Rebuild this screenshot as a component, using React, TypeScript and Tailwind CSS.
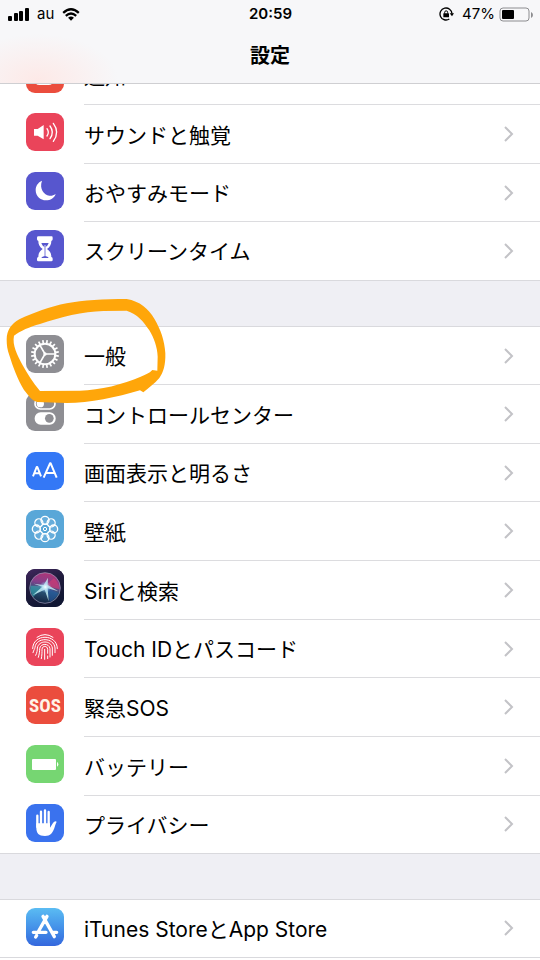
import type { ReactNode } from "react";

const FONT =
  "font-['Inter','Noto_Sans_CJK_JP',sans-serif]";

type Item = { label: string; tile: string; icon: ReactNode; circled?: boolean };

function Glyph({ children }: { children: ReactNode }) {
  return (
    <svg viewBox="0 0 114 114" className="block size-full" aria-hidden="true">
      {children}
    </svg>
  );
}

const teeth = Array.from({ length: 20 }, (_, i) => i * 18);
const petals = Array.from({ length: 8 }, (_, i) => i * 45);

const NotificationIcon = (
  <Glyph>
    <rect x="24" y="24" width="60" height="66" rx="16" fill="#fff" />
  </Glyph>
);

const SoundIcon = (
  <Glyph>
    <path d="M24 48h11l18-12v43L35 68H24z" fill="#fff" />
    <g fill="none" stroke="#fff" strokeWidth="4" strokeLinecap="round">
      <path d="M63 47q8 11 0 22" />
      <path d="M72 39q14 19 0 38" />
      <path d="M82 31q20 27 0 54" />
    </g>
  </Glyph>
);

const MoonIcon = (
  <Glyph>
    <path d="M48 26C36 31 29 42 29 54c0 18 14 31 31 31 13 0 25-7 29-19-7 5-13 6-19 5C54 69 39 50 48 26z" fill="#fff" />
  </Glyph>
);

const HourglassIcon = (
  <Glyph>
    <path
      d="M38 19h39q3 0 3 4v5q0 4-4 5c0 11-4 18-13 24 9 6 13 13 13 24q4 1 4 5v4q0 4-4 4H37q-4 0-4-4v-4q0-4 4-5c0-11 4-18 13-24-9-6-13-13-13-24q-4-1-4-5v-5q0-4 4-4z"
      fill="#fff"
    />
    <path d="M46 39h22c-2 6-5 9-9 12v27c4 2 7 3 9 6H46c2-3 5-4 9-6V51c-4-3-7-6-9-12z" fill="#5756ce" />
    <path d="M55 45h4v34h-4z" fill="#fff" opacity=".6" />
  </Glyph>
);

const GearIcon = (
  <Glyph>
    <g stroke="#fff" fill="none">
      <circle cx="57" cy="57" r="31" strokeWidth="6" />
      {teeth.map((a) => (
        <path key={a} d="M57 25v-10" strokeWidth="5" transform={`rotate(${a + 9} 57 57)`} />
      ))}
      <path d="M57 57h30M57 57L42 31M57 57L42 83" strokeWidth="5" />
      <circle cx="57" cy="57" r="5" fill="#fff" strokeWidth="0" />
    </g>
  </Glyph>
);

const TogglesIcon = (
  <Glyph>
    <rect x="27" y="16" width="60" height="32" rx="16" fill="none" stroke="#fff" strokeWidth="5" />
    <circle cx="43" cy="32" r="11" fill="#fff" />
    <rect x="26" y="58" width="63" height="37" rx="18" fill="#fff" />
    <circle cx="70" cy="76" r="13" fill="#8e8e93" />
  </Glyph>
);

const TextSizeIcon = (
  <Glyph>
    <g fill="none" stroke="#fff" strokeLinejoin="round">
      <path d="M21 73l11-28h2l11 28M25 64h16" strokeWidth="6" />
      <path d="M53 77l19-43h2l18 43M60 63h27" strokeWidth="6" />
    </g>
  </Glyph>
);

const FlowerIcon = (
  <Glyph>
    <g fill="#fff" fillOpacity=".08" stroke="#fff" strokeWidth="4">
      {petals.map((a) => (
        <circle key={a} cx="57" cy="31" r="12" transform={`rotate(${a} 57 57)`} />
      ))}
      <circle cx="57" cy="57" r="15" fill="none" strokeWidth="3" />
      <circle cx="57" cy="57" r="5" fill="none" strokeWidth="3" />
    </g>
  </Glyph>
);

const SiriIcon = (
  <Glyph>
    <defs>
      <radialGradient id="siriCore">
        <stop offset="0" stopColor="#fff" />
        <stop offset=".3" stopColor="#d4f4ff" stopOpacity=".7" />
        <stop offset="1" stopColor="#7fc7ff" stopOpacity="0" />
      </radialGradient>
      <linearGradient id="siriBack" x1="0" y1="0" x2=".4" y2="1">
        <stop offset="0" stopColor="#41265e" />
        <stop offset=".5" stopColor="#1f1b3c" />
        <stop offset="1" stopColor="#111733" />
      </linearGradient>
      <linearGradient id="siriBall" x1=".6" y1="0" x2=".4" y2="1">
        <stop offset="0" stopColor="#b03476" />
        <stop offset=".35" stopColor="#84408c" />
        <stop offset=".6" stopColor="#2a5678" />
        <stop offset="1" stopColor="#14233f" />
      </linearGradient>
    </defs>
    <rect width="114" height="114" fill="url(#siriBack)" />
    <circle cx="57" cy="57" r="46" fill="url(#siriBall)" stroke="#a3a0be" strokeWidth="2" />
    <path d="M57 50L84 28q15 14 17 33z" fill="#d83c70" opacity=".6" />
    <path d="M56 50L14 50q-2 20 8 34z" fill="#3cb9bf" opacity=".5" />
    <path d="M57 52L72 98q18-9 24-26z" fill="#265dad" opacity=".5" />
    <path d="M66 26l-1 22 32 19-32-9 3 39-12-35-36 17 29-26-26-9 30 4z" fill="#c9f3f8" opacity=".8" />
    <circle cx="58" cy="54" r="18" fill="url(#siriCore)" />
  </Glyph>
);

const FingerprintIcon = (
  <Glyph>
    <g fill="none" stroke="#fff" strokeWidth="3" strokeLinecap="round">
      <path d="M33 28q24-17 48 0" />
      <path d="M20 62C20 16 94 16 94 62" />
      <path d="M21 74C23 66 27 62 27 58C31 27 84 27 87 60v14" />
      <path d="M29 82C33 74 34 68 34 60C38 36 76 36 79 60v22" />
      <path d="M37 88C40 78 41 70 41 62C43 45 70 45 72 62v25" />
      <path d="M46 92C48 82 48 72 48 64C49 52 64 52 65 64v12M65 84v8" />
      <path d="M56 94V64" />
    </g>
  </Glyph>
);

const SosIcon = (
  <span className="flex size-full items-center justify-center font-['Liberation_Sans_Narrow','Roboto_Condensed','Liberation_Sans',sans-serif] text-[19px] font-bold leading-none text-[#fff3e8]">
    SOS
  </span>
);

const BatteryIcon = (
  <Glyph>
    <rect x="18" y="42" width="72" height="33" rx="3" fill="#fff" />
    <path d="M93 51q4 2 4 7t-4 7z" fill="#fff" />
  </Glyph>
);

const HandIcon = (
  <Glyph>
    <g stroke="#fff" strokeWidth="7" strokeLinecap="round" fill="none">
      <path d="M34 35v34M45 23v42M57 19v44M68 24v42" />
    </g>
    <path d="M31 58h41v13l9-14q5-7 11-4-3 6-5 13C81 87 73 96 57 96 38 96 31 87 31 72z" fill="#fff" />
  </Glyph>
);

const AppStoreIcon = (
  <Glyph>
    <g stroke="#fff" strokeWidth="10" strokeLinecap="round" fill="none">
      <path d="M63 25L38 69M51 25l34 61M22 73h38M79 73h13M32 82l-3 5" />
    </g>
  </Glyph>
);

const SECTIONS: Item[][] = [
  [
    { label: "通知", tile: "bg-[#eb4d3d]", icon: NotificationIcon },
    { label: "サウンドと触覚", tile: "bg-[#ea445a]", icon: SoundIcon },
    { label: "おやすみモード", tile: "bg-[#5756ce]", icon: MoonIcon },
    { label: "スクリーンタイム", tile: "bg-[#5756ce]", icon: HourglassIcon },
  ],
  [
    { label: "一般", tile: "bg-[#8e8e93]", icon: GearIcon, circled: true },
    { label: "コントロールセンター", tile: "bg-[#8e8e93]", icon: TogglesIcon },
    { label: "画面表示と明るさ", tile: "bg-[#3478f6]", icon: TextSizeIcon },
    { label: "壁紙", tile: "bg-[#59a7d8]", icon: FlowerIcon },
    { label: "Siriと検索", tile: "bg-[#1f1b3c]", icon: SiriIcon },
    { label: "Touch IDとパスコード", tile: "bg-[#ea445a]", icon: FingerprintIcon },
    { label: "緊急SOS", tile: "bg-[#eb4d3d]", icon: SosIcon },
    { label: "バッテリー", tile: "bg-[#76d672]", icon: BatteryIcon },
    { label: "プライバシー", tile: "bg-[#3a72ee]", icon: HandIcon },
  ],
  [
    {
      label: "iTunes StoreとApp Store",
      tile: "bg-linear-to-b from-[#5bbcf3] to-[#3567dd]",
      icon: AppStoreIcon,
    },
  ],
];

function MarkerCircle() {
  return (
    <svg
      viewBox="0 0 540 480"
      className="pointer-events-none absolute -top-[37px] left-0 z-10 h-[160px] w-[180px]"
      aria-hidden="true"
    >
      <path
        fill="#ffa60a"
        fillRule="evenodd"
        d="M20 148C20 122 34 101 58 88C100 68 150 50 200 40C250 30 310 27 380 27C420 34 445 56 463 86C482 118 494 152 496 190C497 225 490 248 478 264C464 280 446 294 430 307L420 301C350 322 270 339 200 339L112 336C94 332 86 316 72 300C52 268 38 228 28 196C22 180 20 165 20 148ZM42 137C60 123 90 110 120 102C180 82 250 64 310 63L380 62C412 72 430 94 448 121C462 144 472 172 473 200L472 242L457 240C448 250 436 254 422 260C370 283 300 300 240 302L120 303C98 278 82 250 68 226C52 194 36 166 42 137Z"
      />
    </svg>
  );
}

function Row({ item }: { item: Item }) {
  return (
    <li className="relative h-[59px] border-[#d9d9dd] first:border-t last:border-b nth-[3n]:h-[58px]">
      <button type="button" className="flex h-full w-full items-stretch gap-5 pl-[26px] text-left">
        <span className={`mt-2 size-[38px] shrink-0 overflow-hidden rounded-[9px] ${item.tile}`}>{item.icon}</span>
        <span className="flex min-w-0 flex-1 items-center justify-between border-b border-[#dcdcdf] pr-[26px] [li:last-child_&]:border-transparent">
          <span className="truncate pt-[3px] text-[21px] leading-[30px] text-black">{item.label}</span>
          <svg viewBox="0 0 10 18" className="h-[18px] w-[10px] shrink-0" fill="none" stroke="#c3c3c7" strokeWidth="2" aria-hidden="true">
            <path d="M1 2l7 7-7 7" />
          </svg>
        </span>
      </button>
      {item.circled && <MarkerCircle />}
    </li>
  );
}

function StatusBar() {
  return (
    <div className="grid h-7 grid-cols-3 items-center pl-2 pr-[7px] text-[15px] leading-5 text-black">
      <div className="flex items-center gap-2">
        <svg viewBox="0 0 21 13" className="h-[13px] w-[21px]" aria-hidden="true">
          <rect x="0" y="8" width="4" height="5" rx="1" />
          <rect x="6" y="5" width="4" height="8" rx="1" />
          <rect x="11" y="3" width="4" height="10" rx="1" />
          <rect x="17" y="0" width="4" height="13" rx="1" />
        </svg>
        <span>au</span>
        <svg viewBox="0 0 54 40" className="h-[13px] w-[18px]" fill="none" stroke="#000" strokeWidth="7" aria-hidden="true">
          <path d="M3 15Q27-7 51 15M11 24q16-14 32 0" />
          <path d="M27 39l-9-9q9-7 18 0z" fill="#000" stroke="none" />
        </svg>
      </div>
      <div className="text-center font-semibold">20:59</div>
      <div className="flex items-center justify-end gap-1">
        <svg viewBox="0 0 45 42" className="mr-1 h-[14px] w-[15px]" fill="none" stroke="#000" strokeWidth="4" aria-hidden="true">
          <path d="M31 36A18 18 0 1 1 39 20" />
          <path d="M32 19h13l-6 9z" fill="#000" stroke="none" />
          <rect x="13" y="19" width="17" height="12" rx="1" fill="#000" stroke="none" />
          <path d="M17 20v-4a4 4 0 0 1 9 0v4" strokeWidth="3" />
        </svg>
        <span>47%</span>
        <svg viewBox="0 0 34 15" className="h-[15px] w-[34px]" aria-hidden="true">
          <rect x="1" y="1" width="29" height="13" rx="3" fill="none" stroke="#8d8d90" />
          <rect x="3" y="3" width="12" height="9" rx="1" />
          <path d="M32 5q2 1 2 3t-2 3z" fill="#8d8d90" />
        </svg>
      </div>
    </div>
  );
}

export default function App() {
  return (
    <div className={`relative min-h-screen overflow-hidden bg-white ${FONT}`} lang="ja">
      <header className="absolute inset-x-0 top-0 z-20 h-[84px] border-b border-[#cfcfd2] bg-[#f7f7f9] bg-[radial-gradient(ellipse_80px_46px_at_38px_80px,#fde9e7,#f7f7f900)]">
        <StatusBar />
        <h1 className="pt-[13px] text-center text-[20px] font-bold leading-[30px] text-black">設定</h1>
      </header>
      <main className="flex flex-col gap-[45px] bg-[#efeff4] pt-[46px]">
        {SECTIONS.map((items, i) => (
          <ul key={i} className="bg-white">
            {items.map((item) => (
              <Row key={item.label} item={item} />
            ))}
          </ul>
        ))}
      </main>
    </div>
  );
}
